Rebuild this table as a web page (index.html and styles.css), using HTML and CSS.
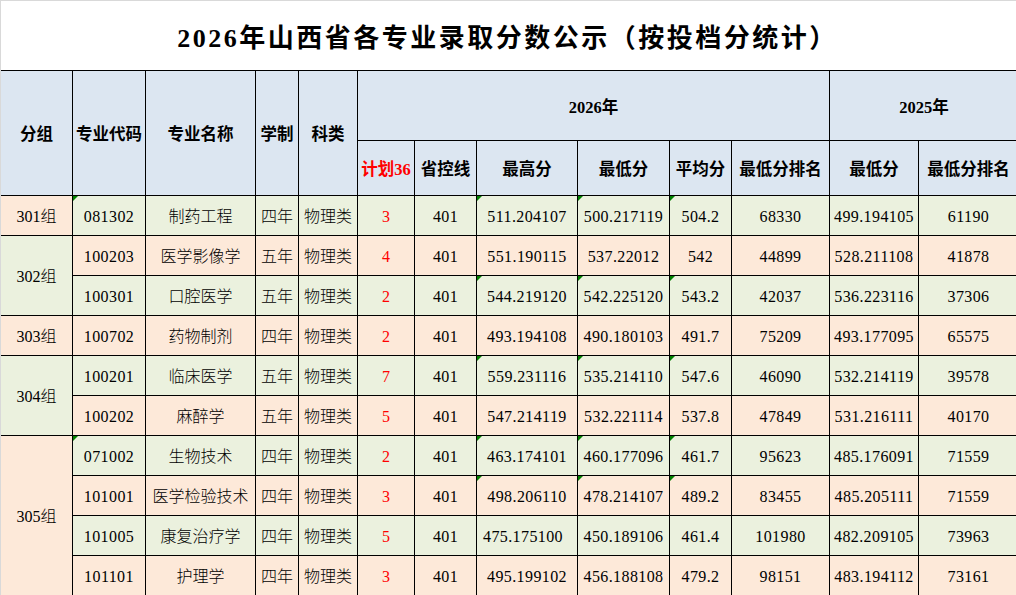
FILE: index.html
```html
<!DOCTYPE html>
<html lang="zh-CN">
<head>
<meta charset="utf-8">
<title>2026年山西省各专业录取分数公示</title>
<link rel="stylesheet" href="styles.css">
</head>
<body>
<div class="page">
  <div class="title">2026年山西省各专业录取分数公示（按投档分统计）</div>
  <div class="sheet">
    <div class="h hs">分组</div>
    <div class="h hs">专业代码</div>
    <div class="h hs">专业名称</div>
    <div class="h hs">学制</div>
    <div class="h hs">科类</div>
    <div class="h y26">2026年</div>
    <div class="h y25">2025年</div>
    <div class="h sub red">计划36</div>
    <div class="h sub">省控线</div>
    <div class="h sub">最高分</div>
    <div class="h sub">最低分</div>
    <div class="h sub">平均分</div>
    <div class="h sub">最低分排名</div>
    <div class="h sub">最低分</div>
    <div class="h sub">最低分排名</div>

    <div class="row g">
      <div class="c grp p">301组</div>
      <div class="c m">081302</div><div class="c">制药工程</div><div class="c">四年</div><div class="c">物理类</div>
      <div class="c red">3</div><div class="c">401</div><div class="c m">511.204107</div><div class="c m">500.217119</div><div class="c m">504.2</div><div class="c">68330</div><div class="c">499.194105</div><div class="c">61190</div>
    </div>
    <div class="row p">
      <div class="c grp g s2">302组</div>
      <div class="c">100203</div><div class="c">医学影像学</div><div class="c">五年</div><div class="c">物理类</div>
      <div class="c red">4</div><div class="c">401</div><div class="c">551.190115</div><div class="c">537.22012</div><div class="c">542</div><div class="c">44899</div><div class="c">528.211108</div><div class="c">41878</div>
    </div>
    <div class="row g">
      <div class="c">100301</div><div class="c">口腔医学</div><div class="c">五年</div><div class="c">物理类</div>
      <div class="c red">2</div><div class="c">401</div><div class="c m">544.219120</div><div class="c m">542.225120</div><div class="c m">543.2</div><div class="c">42037</div><div class="c">536.223116</div><div class="c">37306</div>
    </div>
    <div class="row p">
      <div class="c grp p">303组</div>
      <div class="c">100702</div><div class="c">药物制剂</div><div class="c">四年</div><div class="c">物理类</div>
      <div class="c red">2</div><div class="c">401</div><div class="c">493.194108</div><div class="c">490.180103</div><div class="c">491.7</div><div class="c">75209</div><div class="c">493.177095</div><div class="c">65575</div>
    </div>
    <div class="row g">
      <div class="c grp g s2">304组</div>
      <div class="c">100201</div><div class="c">临床医学</div><div class="c">五年</div><div class="c">物理类</div>
      <div class="c red">7</div><div class="c">401</div><div class="c m">559.231116</div><div class="c m">535.214110</div><div class="c m">547.6</div><div class="c">46090</div><div class="c">532.214119</div><div class="c">39578</div>
    </div>
    <div class="row p">
      <div class="c">100202</div><div class="c">麻醉学</div><div class="c">五年</div><div class="c">物理类</div>
      <div class="c red">5</div><div class="c">401</div><div class="c">547.214119</div><div class="c">532.221114</div><div class="c">537.8</div><div class="c">47849</div><div class="c">531.216111</div><div class="c">40170</div>
    </div>
    <div class="row g">
      <div class="c grp p s4">305组</div>
      <div class="c m">071002</div><div class="c">生物技术</div><div class="c">四年</div><div class="c">物理类</div>
      <div class="c red">2</div><div class="c">401</div><div class="c m">463.174101</div><div class="c m">460.177096</div><div class="c m">461.7</div><div class="c">95623</div><div class="c">485.176091</div><div class="c">71559</div>
    </div>
    <div class="row p">
      <div class="c">101001</div><div class="c">医学检验技术</div><div class="c">四年</div><div class="c">物理类</div>
      <div class="c red">3</div><div class="c">401</div><div class="c m">498.206110</div><div class="c m">478.214107</div><div class="c m">489.2</div><div class="c">83455</div><div class="c">485.205111</div><div class="c">71559</div>
    </div>
    <div class="row g">
      <div class="c">101005</div><div class="c">康复治疗学</div><div class="c">四年</div><div class="c">物理类</div>
      <div class="c red">5</div><div class="c">401</div><div class="c sh">475.175100</div><div class="c">450.189106</div><div class="c">461.4</div><div class="c">101980</div><div class="c">482.209105</div><div class="c">73963</div>
    </div>
    <div class="row p">
      <div class="c">101101</div><div class="c">护理学</div><div class="c">四年</div><div class="c">物理类</div>
      <div class="c red">3</div><div class="c">401</div><div class="c">495.199102</div><div class="c">456.188108</div><div class="c">479.2</div><div class="c">98151</div><div class="c">483.194112</div><div class="c">73161</div>
    </div>
  </div>
</div>
</body>
</html>
```
FILE: styles.css
```css
html, body {
  margin: 0;
  padding: 0;
  background: #ffffff;
}

.page {
  width: 1016px;
  height: 595px;
  box-sizing: border-box;
  border-top: 1px solid #d9d9d9;
  border-left: 1px solid #d9d9d9;
  overflow: hidden;
  background: #ffffff;
  font-family: "Liberation Serif", "Noto Sans CJK SC", serif;
  color: #000000;
}

.title {
  height: 69px;
  display: flex;
  align-items: center;
  justify-content: center;
  padding-top: 6px;
  padding-right: 2px;
  box-sizing: border-box;
  font-size: 26px;
  font-weight: bold;
  letter-spacing: 2.5px;
  line-height: 1;
  color: #000000;
}

.sheet {
  display: grid;
  grid-template-columns: 72px 73px 110px 43px 59px 57px 62px 101px 92px 62px 98px 89px 100px;
  grid-template-rows: 70px 55px repeat(10, 40px);
  border-top: 1px solid #000000;
  width: 1018px;
}

.h,
.c {
  box-sizing: border-box;
  border-right: 1px solid #000000;
  border-bottom: 1px solid #000000;
  display: flex;
  align-items: center;
  justify-content: center;
  white-space: nowrap;
  line-height: 1;
  position: relative;
}

.h {
  background: #dce6f1;
  font-size: 16.5px;
  font-weight: bold;
}

.hs {
  grid-row: span 2;
  padding-top: 5px;
}

.y26 {
  grid-column: span 6;
  padding-top: 5px;
}

.y25 {
  grid-column: span 2;
  padding-top: 5px;
}

.sub {
  padding-top: 4px;
}

.h.red {
  color: #ff0000;
}

.row {
  display: contents;
}

.c {
  font-size: 16px;
  font-weight: 300;
  padding-top: 2px;
}

.row > .c:nth-last-child(-n+7),
.row > .c:nth-last-child(12) {
  letter-spacing: 0.4px;
}

.row.g > .c {
  background: #ebf1de;
}

.row.p > .c {
  background: #fde9d9;
}

.row > .c.grp.g {
  background: #ebf1de;
}

.row > .c.grp.p {
  background: #fde9d9;
}

.s2 {
  grid-row: span 2;
}

.s4 {
  grid-row: span 4;
}

.c.red {
  color: #ff0000;
}

.c.sh {
  padding-right: 8px;
}

.m::before {
  content: "";
  position: absolute;
  left: 0;
  top: 0;
  width: 0;
  height: 0;
  border-top: 5px solid #008000;
  border-right: 5px solid transparent;
}
```
